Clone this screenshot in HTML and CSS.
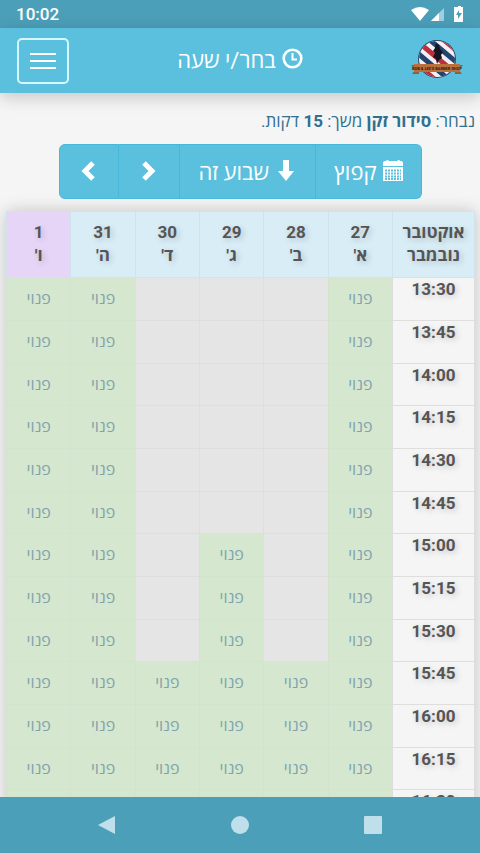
FILE: index.html
```html
<!DOCTYPE html>
<html lang="he" dir="rtl">

<head>
    <meta charset="UTF-8">
    <meta name="viewport" content="width=device-width, initial-scale=1.0">
    <title>בחר/י שעה</title>
    <link rel="stylesheet" href="styles.css">
</head>

<body>

    <!-- Status bar -->
    <div class="status-bar" dir="ltr">
        <span class="clock">10:02</span>
        <svg class="status-icons" width="56" height="18" viewBox="0 0 56 18" aria-hidden="true">
            <path fill="#fff" d="M1 5Q10-1 19 5L10 16Z"/>
            <path fill="#9fd0e0" d="M34 3v13H21z"/>
            <path fill="#fff" d="M29 8v8h-8z"/>
            <path fill="#fff" d="M46 2h2V1h3v1h2v15h-9V2z"/>
            <path fill="#4c9fb9" d="M49 5l-3 5h2v4l4-6h-3z"/>
        </svg>
    </div>

    <header class="navbar">
        <a href="#" class="logo" aria-label="Barber Shop">
            <svg width="52" height="42" viewBox="0 0 52 42">
                <defs>
                    <clipPath id="disc"><circle cx="26" cy="19" r="18"/></clipPath>
                </defs>
                <circle cx="26" cy="19" r="19" fill="#32475f"/>
                <g clip-path="url(#disc)">
                    <rect width="52" height="42" fill="#f2f0f2"/>
                    <g transform="rotate(40 26 21)">
                        <path fill="#c22c3f" d="M-4-2h60v5H-4zM-4 16h60v5H-4zM-4 34h60v5H-4z"/>
                        <path fill="#23446f" d="M-4 7h60v5H-4zM-4 25h60v5H-4z"/>
                    </g>
                </g>
                <path fill="#161520" d="M25 3l3 2 1 4 3 3-2 3 1 3-3 2-2 4-1-5-3-2 2-4-2-2 2-3z"/>
                <path fill="#945f3d" d="M0 25h8v9H1l3-4zM52 25h-8v9h7l-3-4z"/>
                <path fill="#b9703d" d="M3 24h46v8H3z"/>
                <text x="26" y="30" class="logo-text">BOB &amp; LEE'S BARBER SHOP</text>
            </svg>
        </a>
        <h1 class="title">
            <svg width="21" height="21" viewBox="0 0 21 21" fill="none" stroke="#fff" aria-hidden="true">
                <circle cx="10.5" cy="10.5" r="8.8" stroke-width="2.6"/>
                <path stroke-width="2" d="M10.5 5v6.5H15"/>
            </svg>
            <span>בחר/י שעה</span>
        </h1>
        <button type="button" class="menu-btn" aria-label="תפריט">
            <span></span>
            <span></span>
            <span></span>
        </button>
    </header>

    <main class="content">
        <p class="selected">נבחר: <strong>סידור זקן</strong> משך: <strong>15</strong> דקות.</p>

        <div class="btn-group">
            <button type="button" class="btn">
                <svg width="20" height="22" viewBox="0 0 20 22" aria-hidden="true">
                    <path fill="#fff" d="M0 3Q0 1 2 1h1Q4-1 6 1h8q2-2 3 0h1q2 0 2 2v3H0zM0 7h20v14H0z"/>
                    <path fill="none" stroke="#5bc0de" stroke-dasharray="2 1" stroke-width="2" d="M2 10.500h16M2 13.500h16M2 16.500h16M2 19h16"/>
                </svg>
                קפוץ
            </button>
            <button type="button" class="btn">
                <svg width="22" height="22" viewBox="-2 0 22 22" aria-hidden="true">
                    <path fill="#fff" d="M6 0h6v11h5l-8 10-8-10h5z"/>
                </svg>
                שבוע זה
            </button>
            <button type="button" class="btn" aria-label="הבא">
                <svg width="24" height="22" viewBox="0 0 24 22" aria-hidden="true">
                    <path fill="none" stroke="#fff" stroke-width="5" d="M7 3l8 8-8 8"/>
                </svg>
            </button>
            <button type="button" class="btn" aria-label="הקודם">
                <svg width="22" height="22" viewBox="0 0 22 22" aria-hidden="true">
                    <path fill="none" stroke="#fff" stroke-width="5" d="M15 3l-8 8 8 8"/>
                </svg>
            </button>
        </div>

        <table class="schedule">
            <thead>
                <tr>
                    <th class="months">אוקטובר<br>נובמבר</th>
                    <th>27<br>א'</th>
                    <th>28<br>ב'</th>
                    <th>29<br>ג'</th>
                    <th>30<br>ד'</th>
                    <th>31<br>ה'</th>
                    <th class="next-month">1<br>ו'</th>
                </tr>
            </thead>
            <tbody>
                <tr>
                    <th>13:30</th>
                    <td class="free"><a href="#">פנוי</a></td><td></td><td></td><td></td>
                    <td class="free"><a href="#">פנוי</a></td><td class="free"><a href="#">פנוי</a></td>
                </tr>
                <tr>
                    <th>13:45</th>
                    <td class="free"><a href="#">פנוי</a></td><td></td><td></td><td></td>
                    <td class="free"><a href="#">פנוי</a></td><td class="free"><a href="#">פנוי</a></td>
                </tr>
                <tr>
                    <th>14:00</th>
                    <td class="free"><a href="#">פנוי</a></td><td></td><td></td><td></td>
                    <td class="free"><a href="#">פנוי</a></td><td class="free"><a href="#">פנוי</a></td>
                </tr>
                <tr>
                    <th>14:15</th>
                    <td class="free"><a href="#">פנוי</a></td><td></td><td></td><td></td>
                    <td class="free"><a href="#">פנוי</a></td><td class="free"><a href="#">פנוי</a></td>
                </tr>
                <tr>
                    <th>14:30</th>
                    <td class="free"><a href="#">פנוי</a></td><td></td><td></td><td></td>
                    <td class="free"><a href="#">פנוי</a></td><td class="free"><a href="#">פנוי</a></td>
                </tr>
                <tr>
                    <th>14:45</th>
                    <td class="free"><a href="#">פנוי</a></td><td></td><td></td><td></td>
                    <td class="free"><a href="#">פנוי</a></td><td class="free"><a href="#">פנוי</a></td>
                </tr>
                <tr>
                    <th>15:00</th>
                    <td class="free"><a href="#">פנוי</a></td><td></td><td class="free"><a href="#">פנוי</a></td><td></td>
                    <td class="free"><a href="#">פנוי</a></td><td class="free"><a href="#">פנוי</a></td>
                </tr>
                <tr>
                    <th>15:15</th>
                    <td class="free"><a href="#">פנוי</a></td><td></td><td class="free"><a href="#">פנוי</a></td><td></td>
                    <td class="free"><a href="#">פנוי</a></td><td class="free"><a href="#">פנוי</a></td>
                </tr>
                <tr>
                    <th>15:30</th>
                    <td class="free"><a href="#">פנוי</a></td><td></td><td class="free"><a href="#">פנוי</a></td><td></td>
                    <td class="free"><a href="#">פנוי</a></td><td class="free"><a href="#">פנוי</a></td>
                </tr>
                <tr>
                    <th>15:45</th>
                    <td class="free"><a href="#">פנוי</a></td><td class="free"><a href="#">פנוי</a></td><td class="free"><a href="#">פנוי</a></td>
                    <td class="free"><a href="#">פנוי</a></td><td class="free"><a href="#">פנוי</a></td><td class="free"><a href="#">פנוי</a></td>
                </tr>
                <tr>
                    <th>16:00</th>
                    <td class="free"><a href="#">פנוי</a></td><td class="free"><a href="#">פנוי</a></td><td class="free"><a href="#">פנוי</a></td>
                    <td class="free"><a href="#">פנוי</a></td><td class="free"><a href="#">פנוי</a></td><td class="free"><a href="#">פנוי</a></td>
                </tr>
                <tr>
                    <th>16:15</th>
                    <td class="free"><a href="#">פנוי</a></td><td class="free"><a href="#">פנוי</a></td><td class="free"><a href="#">פנוי</a></td>
                    <td class="free"><a href="#">פנוי</a></td><td class="free"><a href="#">פנוי</a></td><td class="free"><a href="#">פנוי</a></td>
                </tr>
                <tr>
                    <th>16:30</th>
                    <td class="free"></td><td class="free"></td><td class="free"></td>
                    <td class="free"></td><td class="free"></td><td class="free"></td>
                </tr>
            </tbody>
        </table>
    </main>

    <!-- System navigation -->
    <nav class="system-nav" dir="ltr">
        <button type="button" aria-label="Back">
            <svg width="20" height="20" viewBox="0 0 20 20"><path d="M18 1v18L1 10z"/></svg>
        </button>
        <button type="button" aria-label="Home">
            <svg width="20" height="20" viewBox="0 0 20 20"><circle cx="10" cy="10" r="9"/></svg>
        </button>
        <button type="button" aria-label="Recent">
            <svg width="20" height="20" viewBox="0 0 20 20"><rect x="1" y="1" width="18" height="18" rx="1"/></svg>
        </button>
    </nav>

</body>

</html>
```

FILE: styles.css
```css
* {
    box-sizing: border-box;
}

body {
    display: flex;
    flex-direction: column;
    height: 100vh;
    margin: 0;
    overflow: hidden;
    background-color: #f5f5f5;
    color: #555;
    font-family: Roboto, "Open Sans", "Noto Sans", sans-serif;
    font-size: 16px;
}

button {
    font-family: inherit;
    cursor: pointer;
}

svg {
    display: block;
    flex: none;
}

.status-bar {
    display: flex;
    flex: none;
    align-items: center;
    justify-content: space-between;
    height: 28px;
    padding: 0 14px 0 16px;
    background-color: #4c9fb9;
    color: #fff;
}

.clock {
    font-size: 17px;
    font-weight: 500;
}

.navbar {
    display: grid;
    grid-template-columns: 52px 1fr 52px;
    flex: none;
    align-items: center;
    height: 65px;
    padding: 0 17px;
    background-color: #5bc0de;
    box-shadow: 0 4px 16px rgba(0, 0, 0, 0.2);
}

.logo-text {
    font-size: 4px;
    font-weight: bold;
    text-anchor: middle;
    direction: ltr;
    fill: #3a1d10;
}

.title {
    display: flex;
    align-items: center;
    justify-content: center;
    gap: 6px;
    margin: 0;
    padding-bottom: 4px;
    color: #fff;
    font-size: 22px;
    font-weight: normal;
}

.menu-btn {
    display: flex;
    flex-direction: column;
    align-items: center;
    justify-content: center;
    gap: 5px;
    height: 46px;
    background: none;
    border: 2px solid #d5f8ff;
    border-radius: 5px;
}

.menu-btn span {
    width: 26px;
    height: 2px;
    background-color: #fff;
}

.content {
    flex: 1;
    min-height: 0;
    overflow: hidden;
    padding: 16px 5px 0 6px;
}

.selected {
    margin: 0 0 11px;
    color: #31708f;
    font-size: 17px;
    line-height: 24px;
}

.btn-group {
    display: flex;
    width: fit-content;
    margin: 0 auto 12px;
}

.btn {
    display: flex;
    align-items: center;
    gap: 6px;
    height: 55px;
    padding: 0 18px 2px;
    background-color: #5bc0de;
    border: 1px solid #46b8da;
    border-left-width: 0;
    color: #fff;
    font-size: 22px;
}

.btn:first-child {
    border-radius: 0 6px 6px 0;
}

.btn:last-child {
    border-left-width: 1px;
    border-radius: 6px 0 0 6px;
}

.schedule {
    width: 100%;
    table-layout: fixed;
    border-collapse: collapse;
    background-color: #e5e5e5;
    box-shadow: 0 0 16px rgba(0, 0, 0, 0.2);
    text-align: center;
}

.schedule th,
.schedule td {
    height: 43px;
    padding: 0 0 2px;
    border: 1px solid #dedede;
}

.schedule tr:nth-child(3n) th,
.schedule tr:nth-child(3n) td {
    height: 42px;
}

.schedule th {
    font-size: 17px;
    font-weight: bold;
    line-height: 23px;
    text-shadow: 2px 2px 6px rgba(0, 0, 0, 0.2);
}

.schedule thead th {
    height: 66px;
    background-color: #d9edf7;
    border-color: #d0e3ec;
}

.schedule thead .months {
    width: 82px;
}

.schedule thead .next-month {
    background-color: #e6d5f7;
}

.schedule tbody th {
    background-color: #f5f5f5;
    vertical-align: top;
}

.schedule .free {
    background-color: #d5e7cf;
    border-color: #d3e3d0;
}

.schedule a {
    color: #7fa3ae;
    text-decoration: none;
}

.system-nav {
    display: flex;
    flex: none;
    align-items: center;
    justify-content: center;
    gap: 93px;
    height: 56px;
    background-color: #4c9fb9;
    position: relative;
}

.system-nav button {
    padding: 10px;
    background: none;
    border: 0;
}

.system-nav svg {
    fill: #bfe0ea;
}
```
